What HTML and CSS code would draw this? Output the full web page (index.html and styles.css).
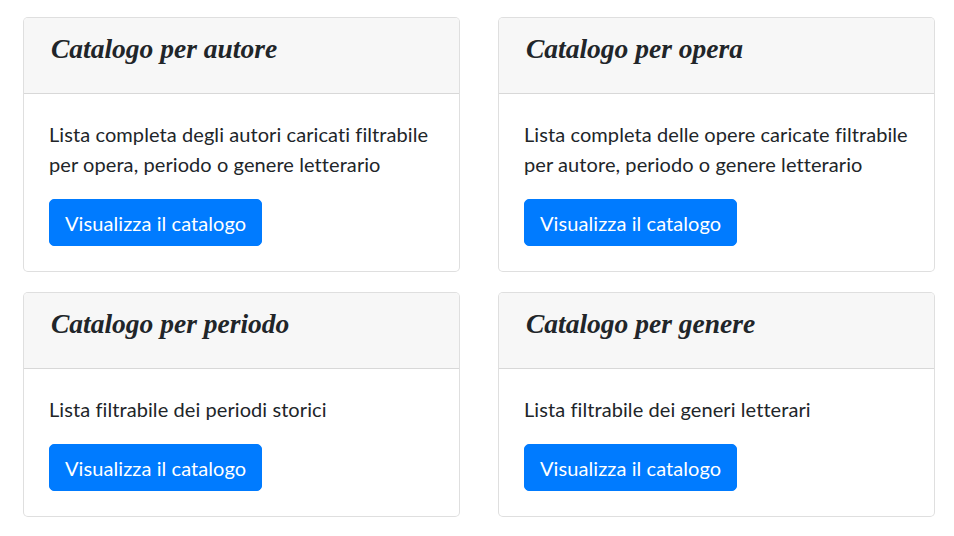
FILE: index.html
```html
<!DOCTYPE html>
<html lang="it">
<head>
<meta charset="utf-8">
<title>Cataloghi</title>
<link rel="stylesheet" href="styles.css">
</head>
<body>
<main class="grid">
  <section class="card">
    <header class="card-header"><h3 class="card-title">Catalogo per autore</h3></header>
    <div class="card-body">
      <p class="card-text">Lista completa degli autori caricati filtrabile per opera, periodo o genere letterario</p>
      <a class="btn" href="#">Visualizza il catalogo</a>
    </div>
  </section>
  <section class="card">
    <header class="card-header"><h3 class="card-title">Catalogo per opera</h3></header>
    <div class="card-body">
      <p class="card-text">Lista completa delle opere caricate filtrabile per autore, periodo o genere letterario</p>
      <a class="btn" href="#">Visualizza il catalogo</a>
    </div>
  </section>
  <section class="card">
    <header class="card-header"><h3 class="card-title">Catalogo per periodo</h3></header>
    <div class="card-body">
      <p class="card-text">Lista filtrabile dei periodi storici</p>
      <a class="btn" href="#">Visualizza il catalogo</a>
    </div>
  </section>
  <section class="card">
    <header class="card-header"><h3 class="card-title">Catalogo per genere</h3></header>
    <div class="card-body">
      <p class="card-text">Lista filtrabile dei generi letterari</p>
      <a class="btn" href="#">Visualizza il catalogo</a>
    </div>
  </section>
</main>
</body>
</html>
```

FILE: styles.css
```css
html, body {
  margin: 0;
  padding: 0;
  background: #fff;
}
body {
  font-family: "Lato", "Noto Sans", sans-serif;
  font-size: 20px;
  line-height: 1.5;
  color: #212529;
  letter-spacing: 0.08px;
}
.grid {
  display: grid;
  grid-template-columns: 437px 437px;
  column-gap: 38px;
  row-gap: 20px;
  padding: 17px 0 0 23px;
  align-items: start;
}
.card {
  border: 1px solid rgba(0, 0, 0, 0.125);
  border-radius: 5px;
  background: #fff;
  overflow: hidden;
}
.card-header {
  background: #f7f7f7;
  border-bottom: 1px solid rgba(0, 0, 0, 0.125);
  padding: 15px 25px 15px 27px;
  height: 45px;
  box-sizing: content-box;
}
.card-title {
  margin: 0;
  font-family: "Liberation Serif", "DejaVu Serif", serif;
  font-style: italic;
  font-weight: 700;
  font-size: 27.5px;
  line-height: 31px;
  letter-spacing: 0;
  color: #212529;
}
.card-body {
  padding: 25px;
}
.card-text {
  margin: 0 0 20px;
}
.btn {
  display: inline-block;
  background: #007bff;
  color: #fff;
  text-decoration: none;
  border: 1px solid #007bff;
  border-radius: 5px;
  padding: 7.5px 15px;
  line-height: 30px;
  font-size: 20px;
}
```
